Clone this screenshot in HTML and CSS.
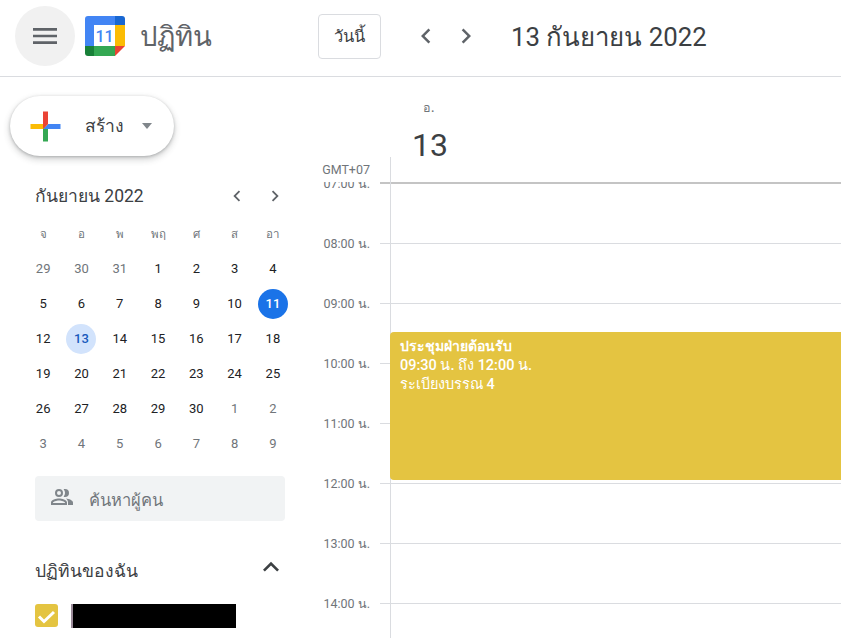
FILE: index.html
```html
<!DOCTYPE html>
<html lang="th">
<head>
  <meta charset="UTF-8" />
  <title>ปฏิทิน</title>
  <link rel="stylesheet" href="styles.css">
</head>
<body>

  <header class="topbar">
    <div class="menu-btn">
      <svg width="32" height="32" viewBox="0 0 24 24"><path d="M3 18h18v-2H3v2zm0-5h18v-2H3v2zm0-7v2h18V6H3z" fill="#5f6368"/></svg>
    </div>
    <svg class="logo" width="40" height="40" viewBox="0 0 40 40">
      <path d="M30 0H3a3 3 0 0 0-3 3v27h9V9h21z" fill="#4285f4"/>
      <path d="M30 0h7a3 3 0 0 1 3 3v6H30z" fill="#1967d2"/>
      <rect x="30" y="9" width="10" height="21" fill="#fbbc04"/>
      <rect x="9" y="30" width="21" height="10" fill="#34a853"/>
      <path d="M0 30h9v10H3a3 3 0 0 1-3-3z" fill="#188038"/>
      <path d="M30 30h10L30 40z" fill="#ea4335"/>
      <rect x="9" y="9" width="21" height="21" fill="#fff"/>
      <text x="19.5" y="25.5" class="logo-num">11</text>
    </svg>
    <span class="app-name">ปฏิทิน</span>
    <div class="today-btn">วันนี้</div>
    <div class="nav-arrows">
      <svg width="30" height="30" viewBox="0 0 24 24"><path d="M15.4 7.4 14 6l-6 6 6 6 1.4-1.4-4.6-4.6z" fill="#5f6368"/></svg>
      <svg width="30" height="30" viewBox="0 0 24 24"><path d="M8.6 7.4 10 6l6 6-6 6-1.4-1.4 4.6-4.6z" fill="#5f6368"/></svg>
    </div>
    <h1 class="date-title">13 กันยายน 2022</h1>
  </header>

  <div class="main">
    <aside class="sidebar">
      <div class="create-btn">
        <svg width="45" height="45" viewBox="0 0 36 36">
          <path fill="#34a853" d="M16 16v14h4V20z"/>
          <path fill="#4285f4" d="M30 16H20l-4 4h14z"/>
          <path fill="#fbbc05" d="M6 16v4h10l4-4z"/>
          <path fill="#ea4335" d="M20 16V6h-4v14z"/>
        </svg>
        <span class="create-label">สร้าง</span>
        <span class="create-caret"></span>
      </div>

      <div class="mini-head">
        <span class="mini-title">กันยายน 2022</span>
        <div class="mini-arrows">
          <svg width="22" height="22" viewBox="0 0 24 24"><path d="M15.4 7.4 14 6l-6 6 6 6 1.4-1.4-4.6-4.6z" fill="#5f6368"/></svg>
          <svg width="22" height="22" viewBox="0 0 24 24"><path d="M8.6 7.4 10 6l6 6-6 6-1.4-1.4 4.6-4.6z" fill="#5f6368"/></svg>
        </div>
      </div>

      <div class="mini-grid">
        <span class="dow">จ</span><span class="dow">อ</span><span class="dow">พ</span><span class="dow">พฤ</span><span class="dow">ศ</span><span class="dow">ส</span><span class="dow">อา</span>
        <span class="day off">29</span><span class="day off">30</span><span class="day off">31</span><span class="day">1</span><span class="day">2</span><span class="day">3</span><span class="day">4</span>
        <span class="day">5</span><span class="day">6</span><span class="day">7</span><span class="day">8</span><span class="day">9</span><span class="day">10</span><span class="day"><b class="today">11</b></span>
        <span class="day">12</span><span class="day"><b class="selected">13</b></span><span class="day">14</span><span class="day">15</span><span class="day">16</span><span class="day">17</span><span class="day">18</span>
        <span class="day">19</span><span class="day">20</span><span class="day">21</span><span class="day">22</span><span class="day">23</span><span class="day">24</span><span class="day">25</span>
        <span class="day">26</span><span class="day">27</span><span class="day">28</span><span class="day">29</span><span class="day">30</span><span class="day off">1</span><span class="day off">2</span>
        <span class="day off">3</span><span class="day off">4</span><span class="day off">5</span><span class="day off">6</span><span class="day off">7</span><span class="day off">8</span><span class="day off">9</span>
      </div>

      <div class="people-search">
        <svg width="24" height="24" viewBox="0 0 24 24"><path fill="#80868b" d="M9 12a4 4 0 1 0 0-8 4 4 0 0 0 0 8zm0-6a2 2 0 1 1 0 4 2 2 0 0 1 0-4zm0 7.5c-2.7 0-8 1.3-8 4V20h16v-2.5c0-2.7-5.3-4-8-4zM3 18v-.5c.2-.7 3.3-2 6-2s5.8 1.3 6 2v.5H3zm12.8-4.5c1.500.9 2.200 2.200 2.200 4V20h5v-2.500c0-2-3.800-3.700-7.200-4zM15 12a4 4 0 0 0 0-8c-.5 0-1 .1-1.400.3a6 6 0 0 1 0 7.400c.4.2.9.3 1.400.3z"/></svg>
        <span class="people-label">ค้นหาผู้คน</span>
      </div>

      <div class="my-cals">
        <span class="my-cals-label">ปฏิทินของฉัน</span>
        <svg width="32" height="32" viewBox="0 0 24 24"><path d="M7.4 15.4 12 10.8l4.6 4.6L18 14l-6-6-6 6z" fill="#3c4043"/></svg>
      </div>

      <div class="cal-item">
        <span class="cal-check">
          <svg width="23" height="23" viewBox="0 0 23 23"><path d="M4 12.5 9 17.5 19 8" fill="none" stroke="#fff" stroke-width="3"/></svg>
        </span>
        <span class="cal-name"></span>
      </div>
    </aside>

    <section class="day-view">
      <div class="day-head">
        <div class="gmt">GMT+07</div>
        <div class="day-col-head">
          <span class="head-dow">อ.</span>
          <span class="head-num">13</span>
        </div>
      </div>

      <div class="hours">
        <div class="hour"><span class="hour-label">07:00 น.</span><div class="hour-cell"></div></div>
        <div class="hour"><span class="hour-label">08:00 น.</span><div class="hour-cell"></div></div>
        <div class="hour"><span class="hour-label">09:00 น.</span><div class="hour-cell"></div></div>
        <div class="hour"><span class="hour-label">10:00 น.</span><div class="hour-cell"></div></div>
        <div class="hour"><span class="hour-label">11:00 น.</span><div class="hour-cell"></div></div>
        <div class="hour"><span class="hour-label">12:00 น.</span><div class="hour-cell"></div></div>
        <div class="hour"><span class="hour-label">13:00 น.</span><div class="hour-cell"></div></div>
        <div class="hour"><span class="hour-label">14:00 น.</span><div class="hour-cell"></div></div>

        <div class="event">
          <div class="event-title">ประชุมฝ่ายต้อนรับ</div>
          <div>09:30 น. ถึง 12:00 น.</div>
          <div>ระเบียงบรรณ 4</div>
        </div>
      </div>
    </section>
  </div>

</body>
</html>
```

FILE: styles.css
```css
* {
  box-sizing: border-box;
}

body {
  font-family: Roboto, "Noto Sans", "Liberation Sans", sans-serif;
  margin: 0;
  height: 638px;
  overflow: hidden;
  background-color: #fff;
  color: #3c4043;
}

.topbar {
  display: flex;
  align-items: center;
  height: 77px;
  padding: 0 0 4px 15px;
  border-bottom: 1px solid #dadce0;
}

.menu-btn {
  display: flex;
  align-items: center;
  justify-content: center;
  width: 60px;
  height: 60px;
  border-radius: 50%;
  background-color: #f1f1f1;
}

.logo {
  margin-left: 10px;
}

.logo-num {
  font-family: Roboto, sans-serif;
  font-size: 16px;
  font-weight: 500;
  fill: #4285f4;
  text-anchor: middle;
}

.app-name {
  margin-left: 15px;
  width: 178px;
  font-size: 27.5px;
  color: #5f6368;
}

.today-btn {
  display: flex;
  align-items: center;
  justify-content: center;
  width: 63px;
  height: 45px;
  border: 1px solid #dadce0;
  border-radius: 4px;
  font-size: 16.5px;
  font-weight: 500;
}

.nav-arrows {
  display: flex;
  gap: 10px;
  margin-left: 30px;
}

.date-title {
  margin: 1px 0 0 30px;
  font-size: 25.8px;
  font-weight: 400;
}

.main {
  display: flex;
  height: 561px;
}

.sidebar {
  width: 320px;
  flex-shrink: 0;
}

.create-btn {
  display: flex;
  align-items: center;
  width: 164px;
  height: 60px;
  margin: 19px 0 0 10px;
  padding-left: 13px;
  border-radius: 30px;
  background-color: #fff;
  box-shadow: 0 1px 3px rgba(60, 64, 67, 0.3), 0 3px 6px 1px rgba(60, 64, 67, 0.2);
}

.create-label {
  margin-left: 17px;
  font-size: 17.5px;
  font-weight: 500;
}

.create-caret {
  margin-left: 18px;
  border-top: 6px solid #80868b;
  border-left: 5.5px solid transparent;
  border-right: 5.5px solid transparent;
}

.mini-head {
  display: flex;
  align-items: center;
  justify-content: space-between;
  margin: 27px 34px 0 35px;
  height: 26px;
}

.mini-title {
  font-size: 17.5px;
}

.mini-arrows {
  display: flex;
  gap: 16px;
}

.mini-grid {
  display: grid;
  grid-template-columns: repeat(7, 38.3px);
  grid-auto-rows: 35px;
  margin: 7px 0 0 24px;
  justify-items: center;
  align-items: center;
  font-size: 13px;
}

.dow {
  padding-top: 1px;
  font-size: 11.5px;
  font-weight: 500;
  color: #70757a;
}

.day {
  color: #202124;
}

.off {
  color: #70757a;
}

.today, .selected {
  display: flex;
  align-items: center;
  justify-content: center;
  width: 30px;
  height: 30px;
  border-radius: 50%;
  font-weight: 500;
}

.today {
  background-color: #1a73e8;
  color: #fff;
}

.selected {
  background-color: #d2e3fc;
  color: #185abc;
}

.people-search {
  display: flex;
  align-items: center;
  gap: 15px;
  width: 250px;
  height: 45px;
  margin: 15px 0 0 35px;
  padding-left: 15px;
  border-radius: 4px;
  background-color: #f1f3f4;
  font-size: 16.5px;
  color: #70757a;
}

.people-search svg {
  margin-top: -4px;
}

.people-label {
  padding-top: 2px;
}

.my-cals {
  display: flex;
  align-items: center;
  justify-content: space-between;
  width: 252px;
  height: 32px;
  margin: 30px 0 0 35px;
  font-size: 17.5px;
  font-weight: 500;
}

.my-cals-label {
  padding-top: 7px;
}

.cal-item {
  display: flex;
  margin: 21px 0 0 35px;
}

.cal-check {
  display: flex;
  width: 23px;
  height: 23px;
  border-radius: 3px;
  background-color: #e4c441;
}

.cal-name {
  width: 165px;
  height: 24px;
  margin-left: 13px;
  border-left: 2px solid #9a8a99;
  background-color: #000;
  background-clip: padding-box;
}

.day-view {
  flex: 1;
  display: flex;
  flex-direction: column;
  min-width: 0;
}

.day-head {
  display: flex;
  height: 105px;
}

.gmt {
  width: 50px;
  align-self: flex-end;
  margin-bottom: 5px;
  font-size: 12.5px;
  text-align: right;
  color: #70757a;
}

.day-col-head {
  position: relative;
  flex: 1;
  margin-left: 20px;
  display: flex;
  flex-direction: column;
  align-items: flex-start;
  padding-left: 22px;
}

.day-col-head::before {
  content: "";
  position: absolute;
  left: 0;
  top: 80px;
  bottom: 0;
  border-left: 1px solid #dadce0;
}

.head-dow {
  margin: 21px 0 0 11px;
  font-size: 12.5px;
  font-weight: 500;
  color: #70757a;
}

.head-num {
  margin-top: 7px;
  font-size: 32px;
  line-height: 40px;
}

.hours {
  position: relative;
  flex: 1;
  overflow: hidden;
  padding-top: 1px;
}

/* thick line under the all-day header */
.hours::before {
  content: "";
  position: absolute;
  left: 60px;
  right: 0;
  top: 0;
  height: 2px;
  background-color: #c4c4c4;
}

/* column line at the left of the day */
.hours::after {
  content: "";
  position: absolute;
  left: 70px;
  top: 0;
  bottom: 0;
  border-left: 1px solid #dadce0;
}

.hour {
  height: 60px;
  display: flex;
}

.hour-label {
  width: 50px;
  margin-top: -8px;
  font-size: 12.5px;
  line-height: 18px;
  text-align: right;
  color: #70757a;
}

.hour-cell {
  flex: 1;
  margin-left: 10px;
  border-top: 1px solid #dadce0;
}

.event {
  position: absolute;
  z-index: 1;
  left: 70px;
  right: 0;
  top: 150px;
  height: 148px;
  padding: 5px 10px;
  border-radius: 4px 0 0 4px;
  background-color: #e4c441;
  color: #fff;
  font-size: 14.5px;
  font-weight: 500;
  line-height: 19px;
}

.event-title {
  font-size: 14px;
  font-weight: 700;
}
```
